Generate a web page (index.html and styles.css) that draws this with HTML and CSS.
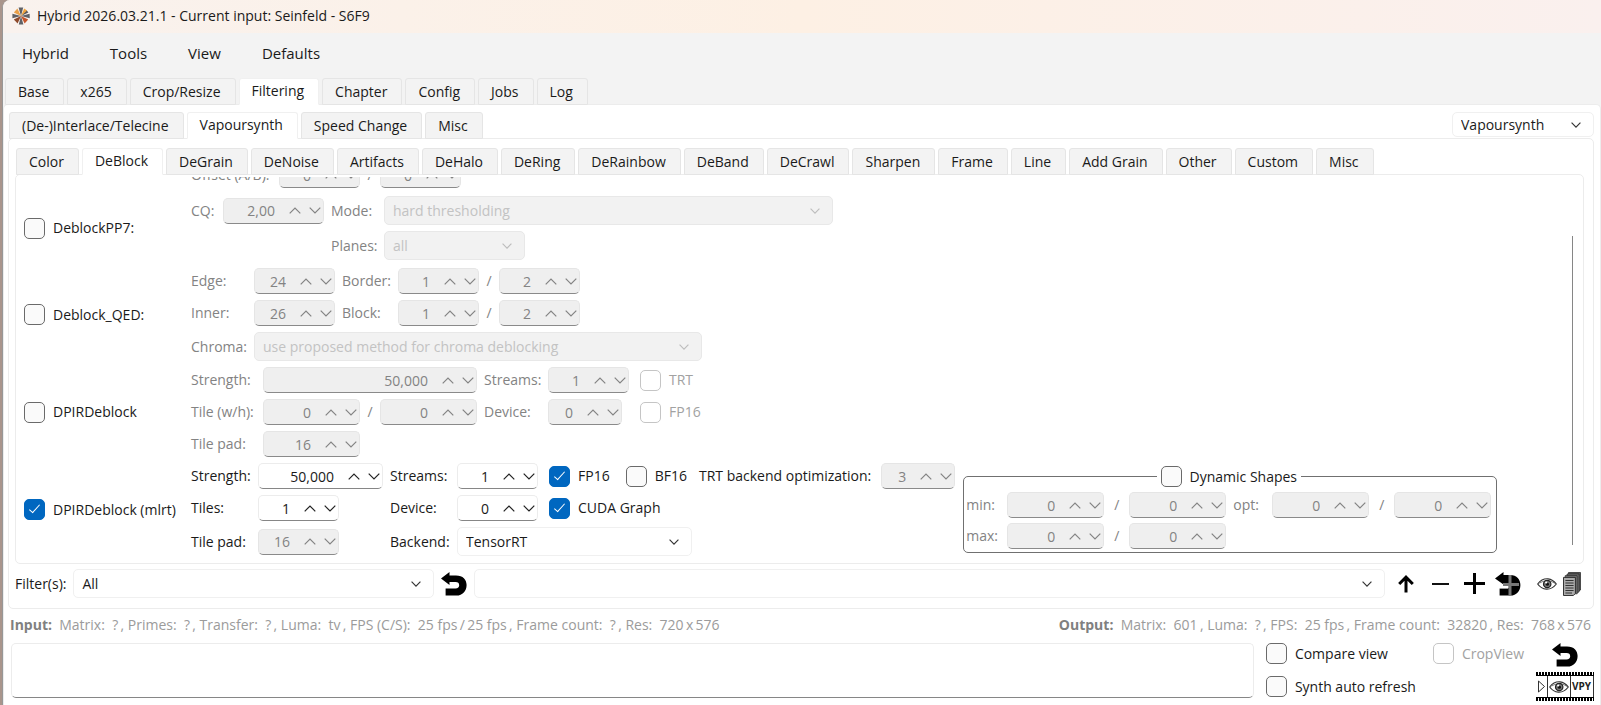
FILE: index.html
```html
<!DOCTYPE html>
<html lang="en">
<head>
    <meta charset="UTF-8">
    <meta name="viewport" content="width=device-width, initial-scale=1.0">
    <title>Hybrid 2026.03.21.1 - Current input: Seinfeld - S6F9</title>
    <link rel="stylesheet" href="styles.css">
</head>
<body>
    <svg class="sprite" aria-hidden="true">
        <symbol id="chevron-up" viewBox="0 0 12 7"><path d="M0.7 6.3 L6 1 L11.3 6.3"/></symbol>
        <symbol id="chevron-down" viewBox="0 0 12 7"><path d="M0.7 0.7 L6 6 L11.3 0.7"/></symbol>
        <symbol id="undo" viewBox="0 0 26 24">
            <path fill="#000" d="M0 6.5 L8.5 0 V3.4 H15 C22 3.4 25.6 7.6 25.6 13 C25.6 19 21.5 23.6 15.5 23.6 H4.6 V16.6 H14.4 C17 16.6 18.2 15.1 18.2 13.3 C18.2 11.3 16.9 10.1 14.6 10.1 H8.5 V13 Z"/>
        </symbol>
        <symbol id="eye" viewBox="0 0 20 12">
            <path fill="#fff" stroke="#333" stroke-width="1.2" d="M0.7 6 C4 1.5 8 0.6 11 0.8 C15 1.2 17.6 3.6 19.3 6 C16 10.2 12.6 11.4 9.4 11.2 C5.6 10.9 2.8 9 0.7 6 Z"/>
            <path fill="none" stroke="#555" stroke-width="0.8" d="M2.6 5.2 C6 2.4 13.6 1.6 17.6 5.4"/>
            <circle cx="10.2" cy="6" r="3.7" fill="#777" stroke="#222" stroke-width="1.2"/>
            <circle cx="10.4" cy="6.2" r="1.6" fill="#111"/>
            <circle cx="9.2" cy="4.5" r="1.1" fill="#fff"/>
        </symbol>
    </svg>

    <div class="window">
        <header class="titlebar">
            <svg class="logo" viewBox="0 0 18 18">
                <path fill="#5f6166" d="M9 9 L6.6 0.6 L11.2 0.4 Z M9 9 L17.6 6.8 L17.8 11.2 Z M9 9 L11.4 17.6 L6.8 17.6 Z M9 9 L0.4 11.2 L0.4 6.8 Z"/>
                <path fill="#e9a04a" d="M9 9 L1.8 5.4 L5.4 1.6 Z"/>
                <path fill="#5a5a5e" d="M9 9 L14.4 3 L16.4 5.6 Z"/>
                <path fill="#f0a43c" d="M9 9 L12.2 1.4 L15 3.4 Z"/>
                <path fill="#c4552a" d="M9 9 L16.2 12.6 L12.6 16.4 Z"/>
                <path fill="#8e4a2c" d="M9 9 L5.6 16.6 L1.8 12.6 Z"/>
            </svg>
            <span>Hybrid 2026.03.21.1 - Current input: Seinfeld - S6F9</span>
        </header>

        <nav class="menubar">
            <button type="button">Hybrid</button>
            <button type="button">Tools</button>
            <button type="button">View</button>
            <button type="button">Defaults</button>
        </nav>

        <div class="tabs tabs-main" role="tablist">
            <button type="button" role="tab">Base</button>
            <button type="button" role="tab">x265</button>
            <button type="button" role="tab">Crop/Resize</button>
            <button type="button" role="tab" class="active" aria-selected="true">Filtering</button>
            <button type="button" role="tab">Chapter</button>
            <button type="button" role="tab">Config</button>
            <button type="button" role="tab">Jobs</button>
            <button type="button" role="tab">Log</button>
        </div>

        <main class="pane pane-main">
            <div class="tab-line">
                <div class="tabs" role="tablist">
                    <button type="button" role="tab">(De-)Interlace/Telecine</button>
                    <button type="button" role="tab" class="active" aria-selected="true">Vapoursynth</button>
                    <button type="button" role="tab">Speed Change</button>
                    <button type="button" role="tab">Misc</button>
                </div>
                <div class="combo combo-engine">
                    <select aria-label="Filter engine"><option>Vapoursynth</option></select>
                    <svg class="arrow"><use href="#chevron-down"/></svg>
                </div>
            </div>

            <section class="pane pane-filtering">
                <div class="tabs" role="tablist">
                    <button type="button" role="tab">Color</button>
                    <button type="button" role="tab" class="active" aria-selected="true">DeBlock</button>
                    <button type="button" role="tab">DeGrain</button>
                    <button type="button" role="tab">DeNoise</button>
                    <button type="button" role="tab">Artifacts</button>
                    <button type="button" role="tab">DeHalo</button>
                    <button type="button" role="tab">DeRing</button>
                    <button type="button" role="tab">DeRainbow</button>
                    <button type="button" role="tab">DeBand</button>
                    <button type="button" role="tab">DeCrawl</button>
                    <button type="button" role="tab">Sharpen</button>
                    <button type="button" role="tab">Frame</button>
                    <button type="button" role="tab">Line</button>
                    <button type="button" role="tab">Add Grain</button>
                    <button type="button" role="tab">Other</button>
                    <button type="button" role="tab">Custom</button>
                    <button type="button" role="tab">Misc</button>
                </div>

                <div class="pane pane-deblock">
                    <div class="filters">
                        <div class="filter disabled">
                            <div class="fields fields-offset">
                                <label for="offsetA">Offset (A/B):</label>
                                <span class="spin"><input id="offsetA" value="0" disabled></span>
                                <span>/</span>
                                <span class="spin"><input aria-label="Offset B" value="0" disabled></span>
                            </div>
                        </div>

                        <div class="filter disabled">
                            <label class="check"><input type="checkbox">DeblockPP7:</label>
                            <div class="fields fields-pp7">
                                <label for="cq">CQ:</label>
                                <span class="spin"><input id="cq" value="2,00" disabled></span>
                                <label for="mode">Mode:</label>
                                <div class="combo">
                                    <select id="mode" disabled><option>hard thresholding</option></select>
                                    <svg class="arrow"><use href="#chevron-down"/></svg>
                                </div>
                                <label for="planes" class="col-3">Planes:</label>
                                <div class="combo combo-planes">
                                    <select id="planes" disabled><option>all</option></select>
                                    <svg class="arrow"><use href="#chevron-down"/></svg>
                                </div>
                            </div>
                        </div>

                        <div class="filter disabled">
                            <label class="check"><input type="checkbox">Deblock_QED:</label>
                            <div class="fields fields-qed">
                                <label for="edge">Edge:</label>
                                <span class="spin"><input id="edge" value="24" disabled></span>
                                <label for="border">Border:</label>
                                <span class="spin"><input id="border" value="1" disabled></span>
                                <span>/</span>
                                <span class="spin"><input aria-label="Inner border" value="2" disabled></span>

                                <label for="inner" class="col-1">Inner:</label>
                                <span class="spin"><input id="inner" value="26" disabled></span>
                                <label for="block">Block:</label>
                                <span class="spin"><input id="block" value="1" disabled></span>
                                <span>/</span>
                                <span class="spin"><input aria-label="Inner block" value="2" disabled></span>

                                <label for="chroma" class="col-1">Chroma:</label>
                                <div class="combo to-end">
                                    <select id="chroma" disabled><option>use proposed method for chroma deblocking</option></select>
                                    <svg class="arrow"><use href="#chevron-down"/></svg>
                                </div>
                            </div>
                        </div>

                        <div class="filter disabled">
                            <label class="check"><input type="checkbox">DPIRDeblock</label>
                            <div class="fields fields-dpir">
                                <label for="strength">Strength:</label>
                                <span class="spin span-3"><input id="strength" value="50,000" disabled></span>
                                <label for="streams">Streams:</label>
                                <span class="spin"><input id="streams" value="1" disabled></span>
                                <label class="check"><input type="checkbox" disabled>TRT</label>

                                <label for="tileW">Tile (w/h):</label>
                                <span class="spin"><input id="tileW" value="0" disabled></span>
                                <span>/</span>
                                <span class="spin"><input aria-label="Tile height" value="0" disabled></span>
                                <label for="device">Device:</label>
                                <span class="spin spin-small"><input id="device" value="0" disabled></span>
                                <label class="check"><input type="checkbox" disabled>FP16</label>

                                <label for="tilePad">Tile pad:</label>
                                <span class="spin"><input id="tilePad" value="16" disabled></span>
                            </div>
                        </div>

                        <div class="filter">
                            <label class="check"><input type="checkbox" checked>DPIRDeblock (mlrt)</label>
                            <div class="fields fields-mlrt">
                                <label for="mlStrength">Strength:</label>
                                <span class="spin"><input id="mlStrength" value="50,000"></span>
                                <label for="mlStreams">Streams:</label>
                                <span class="spin"><input id="mlStreams" value="1"></span>
                                <div class="options">
                                    <label class="check"><input type="checkbox" checked>FP16</label>
                                    <label class="check"><input type="checkbox">BF16</label>
                                    <label for="trtLevel">TRT backend optimization:</label>
                                    <span class="spin spin-small"><input id="trtLevel" value="3" disabled></span>
                                </div>

                                <label for="tiles">Tiles:</label>
                                <span class="spin spin-medium"><input id="tiles" value="1"></span>
                                <label for="mlDevice">Device:</label>
                                <span class="spin"><input id="mlDevice" value="0"></span>
                                <div class="options">
                                    <label class="check"><input type="checkbox" checked>CUDA Graph</label>
                                </div>

                                <label for="mlTilePad">Tile pad:</label>
                                <span class="spin spin-medium"><input id="mlTilePad" value="16" disabled></span>
                                <label for="backend">Backend:</label>
                                <div class="combo combo-backend">
                                    <select id="backend"><option>TensorRT</option></select>
                                    <svg class="arrow"><use href="#chevron-down"/></svg>
                                </div>
                            </div>

                            <fieldset class="shapes">
                                <legend><label class="check"><input type="checkbox">Dynamic Shapes</label></legend>
                                <div class="fields fields-shapes">
                                    <label for="minW">min:</label>
                                    <span class="spin"><input id="minW" value="0" disabled></span>
                                    <span>/</span>
                                    <span class="spin"><input aria-label="min height" value="0" disabled></span>
                                    <label for="optW">opt:</label>
                                    <span class="spin"><input id="optW" value="0" disabled></span>
                                    <span>/</span>
                                    <span class="spin"><input aria-label="opt height" value="0" disabled></span>

                                    <label for="maxW">max:</label>
                                    <span class="spin"><input id="maxW" value="0" disabled></span>
                                    <span>/</span>
                                    <span class="spin"><input aria-label="max height" value="0" disabled></span>
                                </div>
                            </fieldset>
                        </div>
                    </div>
                    <div class="scrollbar"></div>
                </div>

                <div class="filter-bar">
                    <label for="filterSelect">Filter(s):</label>
                    <div class="combo combo-filter">
                        <select id="filterSelect"><option>All</option></select>
                        <svg class="arrow"><use href="#chevron-down"/></svg>
                    </div>
                    <button type="button" class="icon" aria-label="Reset filter"><svg width="26" height="24"><use href="#undo"/></svg></button>
                    <div class="combo combo-custom">
                        <select aria-label="Saved settings"><option></option></select>
                        <svg class="arrow"><use href="#chevron-down"/></svg>
                    </div>
                    <div class="tools">
                        <button type="button" class="icon icon-wide" aria-label="Load">
                            <svg width="16" height="18" viewBox="0 0 16 18"><path fill="none" stroke="#000" stroke-width="3" d="M8 17.5 V2.5 M1.2 9 L8 2.2 L14.8 9"/></svg>
                        </button>
                        <button type="button" class="icon icon-wide" aria-label="Remove">
                            <svg width="17" height="2" viewBox="0 0 17 2"><path fill="#111" d="M0 0 H17 V2 H0 Z"/></svg>
                        </button>
                        <button type="button" class="icon icon-wide" aria-label="Add">
                            <svg width="21" height="21" viewBox="0 0 21 21"><path fill="#000" d="M9 0 H12 V9 H21 V12 H12 V21 H9 V12 H0 V9 H9 Z"/></svg>
                        </button>
                        <button type="button" class="icon icon-wide" aria-label="Restore and add">
                            <svg width="26" height="24" viewBox="0 0 26 24">
                                <path fill="#000" d="M0 6.5 L8.5 0 V3 H15 C22 3 25.4 7.6 25.4 13 C25.4 19 21.5 23.6 15.5 23.6 H4.6 V16.4 H13 V13 H8.5 V12.6 Z"/>
                                <path fill="#777" d="M13.5 3 H16.5 V11 H24 V14 H16.5 V23.4 H13.5 V14 H8 V11 H13.5 Z"/>
                                <path fill="#fff" d="M4.6 14 H13.5 V16.2 H4.6 Z"/>
                            </svg>
                        </button>
                        <button type="button" class="icon icon-eye" aria-label="Preview"><svg width="20" height="12"><use href="#eye"/></svg></button>
                        <button type="button" class="icon" aria-label="Show script">
                            <svg width="18" height="24" viewBox="0 0 18 24">
                                <path fill="#555" stroke="#222" stroke-width="0.7" d="M5.5 0.5 H17.5 V18 L16 19 H5.5 Z"/>
                                <path fill="#777" stroke="#222" stroke-width="0.7" d="M4 2 H16 V20 L14.5 20.5 H4 Z"/>
                                <path fill="#777" stroke="#222" stroke-width="0.7" d="M2.2 3.6 H14.2 V21.8 H2.2 Z"/>
                                <path fill="#aaa" stroke="#222" stroke-width="0.9" d="M0.5 5.4 H12.4 V21.4 L10.4 23.5 H0.5 Z"/>
                                <path stroke="#333" stroke-width="1" d="M2.4 8.5 H10.6 M2.4 11 H10.6 M2.4 13.5 H10.6 M2.4 16 H10.6 M2.4 18.5 H10.6 M2.4 21 H9"/>
                            </svg>
                        </button>
                    </div>
                </div>
            </section>

            <div class="status">
                <p><b>Input:</b>&nbsp; Matrix:&nbsp; ?&thinsp;, Primes:&nbsp; ?&thinsp;, Transfer:&nbsp; ?&thinsp;, Luma:&nbsp; tv&thinsp;, FPS (C/S):&nbsp; 25 fps&thinsp;/&thinsp;25 fps&thinsp;, Frame count:&nbsp; ?&thinsp;, Res:&nbsp; 720&thinsp;x&thinsp;576</p>
                <p><b>Output:</b>&nbsp; Matrix:&nbsp; 601&thinsp;, Luma:&nbsp; ?&thinsp;, FPS:&nbsp; 25 fps&thinsp;, Frame count:&nbsp; 32820&thinsp;, Res:&nbsp; 768&thinsp;x&thinsp;576</p>
            </div>

            <footer class="bottom">
                <textarea aria-label="Script log"></textarea>
                <div class="view-checks">
                    <label class="check"><input type="checkbox">Compare view</label>
                    <label class="check"><input type="checkbox" disabled>CropView</label>
                    <label class="check"><input type="checkbox">Synth auto refresh</label>
                </div>
                <div class="view-buttons">
                    <button type="button" class="icon" aria-label="Reset view"><svg width="26" height="24"><use href="#undo"/></svg></button>
                    <button type="button" class="icon" aria-label="Vapoursynth preview">
                        <svg width="58" height="29" viewBox="0 0 58 29">
                            <path fill="#fff" d="M0 0 H58 V29 H0 Z"/>
                            <path stroke="#000" stroke-width="3" stroke-dasharray="2 1" d="M0 1.5 H58 M0 27.5 H58"/>
                            <path stroke="#000" stroke-width="1" d="M0 3.5 H58 M0 25.5 H58"/>
                            <path fill="none" stroke="#333" stroke-width="1" d="M11.5 4 V25 M34.5 4 V25 M57.5 4 V25 M2.5 9 L8.5 14.5 L2.5 20 Z"/>
                            <use href="#eye" x="13" y="9" width="20" height="12"/>
                            <text class="vpy" x="36" y="18">VPY</text>
                        </svg>
                    </button>
                </div>
            </footer>
        </main>
    </div>

    <script src="script.js"></script>
</body>
</html>
```
FILE: styles.css
```css
body {
    margin: 0;
    padding-left: 2px;
    background-color: #a9958c;
    font-family: "Open Sans", "Noto Sans", sans-serif;
    font-size: 14px;
    line-height: 20px;
    color: #1a1a1a;
}
button, input, select, textarea {
    box-sizing: border-box;
    margin: 0;
    font: inherit;
    color: inherit;
}
p {
    margin: 0;
}
.sprite {
    display: none;
}
.window {
    box-sizing: border-box;
    display: flex;
    flex-direction: column;
    height: 100vh;
    overflow: hidden;
    border-left: 1px solid #979797;
    border-radius: 8px 0 0 0;
    background-color: #f3f3f3;
}

/* title and menu */
.titlebar {
    display: flex;
    align-items: center;
    gap: 7px;
    height: 33px;
    padding-left: 9px;
    background: linear-gradient(to right, #f9f2ee, #fdf0e4 50%, #faf0ee);
}
.titlebar span {
    padding-bottom: 2px;
}
.logo {
    width: 18px;
    height: 18px;
    padding-bottom: 2px;
}
.menubar {
    display: flex;
    align-items: center;
    gap: 41px;
    height: 45px;
    padding-left: 19px;
    font-size: 15px;
    box-sizing: border-box;
    padding-bottom: 6px;
}
.menubar button {
    padding: 0;
    border: none;
    background: none;
}

/* tabs */
.tabs {
    display: flex;
    gap: 3px;
    margin-bottom: -1px;
    position: relative;
}
.tabs button {
    height: 27px;
    padding: 1px 14px 0 12px;
    border: 1px solid #e5e5e5;
    border-radius: 3px 3px 0 0;
    background-color: #f3f3f3;
    line-height: 20px;
    white-space: nowrap;
}
.tabs .active {
    padding-top: 0;
    padding-bottom: 2px;
    border-color: #f0f0f0;
    border-bottom-color: #fff;
    background-color: #fff;
}
.tabs-main {
    padding-left: 2px;
}

/* panes */
.pane {
    display: flex;
    flex-direction: column;
    box-sizing: border-box;
    border: 1px solid #ececec;
    border-radius: 5px;
    background-color: #fff;
}
.pane-main {
    flex: 1;
    min-height: 0;
    padding: 7px 6px 4px 4px;
    border-bottom: none;
    border-radius: 5px 5px 0 0;
}
.pane-filtering {
    flex: 1;
    min-height: 0;
    padding: 9px 9px 10px 6px;
}
.pane-filtering > .tabs {
    padding-left: 1px;
}
.pane-deblock {
    flex: 1;
    min-height: 0;
    flex-direction: row;
    padding: 2px 10px 7px 8px;
}
.tab-line {
    display: flex;
    justify-content: space-between;
    padding-left: 1px;
}

/* combo boxes */
.combo {
    position: relative;
    height: 29px;
}
.combo select {
    appearance: none;
    width: 100%;
    height: 100%;
    padding: 0 30px 0 8px;
    border: 1px solid #f0f0f0;
    border-radius: 5px;
    background-color: #fff;
}
.combo select:disabled {
    border-color: #e8e8e8;
    background-color: #f2f2f2;
    color: #c3c3c3;
    opacity: 1;
}
.arrow {
    position: absolute;
    right: 13px;
    top: 50%;
    width: 10px;
    height: 6px;
    margin-top: -3px;
    fill: none;
    stroke: #333;
    stroke-width: 1.4;
    pointer-events: none;
}
select:disabled + .arrow {
    stroke: #bdbdbd;
}
.combo-engine {
    width: 142px;
    height: 25px;
}
.combo-planes {
    width: 141px;
}
.combo-backend {
    width: 235px;
}
.combo-filter {
    width: 361px;
}
.combo-custom {
    flex: 1;
}

/* spin boxes */
.spin {
    position: relative;
    display: block;
    height: 26px;
}
.spin input {
    width: 100%;
    height: 100%;
    padding: 0 48px 0 4px;
    border: 1px solid #ececec;
    border-bottom-color: #868686;
    border-radius: 5px;
    background-color: #fff;
    text-align: right;
}
.spin input:disabled {
    border-color: #e5e5e5;
    border-bottom-color: #8a8a8a;
    background-color: #efefef;
    color: #838383;
}
.spin .steps {
    position: absolute;
    top: 0;
    right: 3px;
    display: flex;
    align-items: center;
    gap: 8px;
    height: 100%;
}
.spin button {
    display: flex;
    padding: 0;
    border: none;
    background: none;
}
.spin svg {
    width: 12px;
    height: 7px;
    fill: none;
    stroke: #222;
    stroke-width: 1.2;
}
.spin input:disabled + .steps svg {
    stroke: #838383;
}
.spin-small {
    width: 74px;
}
.spin-medium {
    width: 81px;
}

/* check boxes */
.check {
    display: flex;
    align-items: center;
    gap: 8px;
    white-space: nowrap;
}
.check input {
    appearance: none;
    flex: none;
    display: flex;
    justify-content: center;
    width: 21px;
    height: 21px;
    border: 1px solid #6a6a6a;
    border-radius: 5px;
    background-color: #fafafa;
}
.check input:checked {
    border-color: #0067c0;
    background-color: #0067c0;
}
.check input:checked::after {
    content: "";
    width: 4px;
    height: 10px;
    margin-top: 2px;
    border: solid #fff;
    border-width: 0 1px 1px 0;
    transform: rotate(42deg);
}
.check input:disabled {
    border-color: #c5c5c5;
    background-color: #fff;
}
.check:has(input:disabled) {
    color: #a2a2a2;
}

/* filter settings, scrolled down to the last one */
.filters {
    flex: 1;
    display: flex;
    flex-direction: column;
    justify-content: flex-end;
    gap: 6px;
    overflow: hidden;
}
.filter {
    display: flex;
    align-items: center;
    gap: 8px;
}
.filter:nth-child(-n+2) {
    margin-bottom: 2px;
}
.filter > .check {
    width: 159px;
}
.disabled .fields {
    color: #838383;
}
.fields {
    display: grid;
    align-items: center;
    gap: 6px 7px;
    white-space: nowrap;
}
.fields .check {
    margin-left: 4px;
}
.fields-offset {
    grid-template-columns: 81px 81px 6px 81px;
    margin-left: 167px;
}
.fields-pp7 {
    grid-template-columns: 25px 101px 46px 449px;
}
.fields-qed {
    grid-template-columns: 56px 81px 49px 81px 6px 81px 115px;
}
.fields-dpir {
    grid-template-columns: 65px 97px 6px 97px 57px 81px auto;
}
.fields-mlrt {
    grid-template-columns: 60px 125px 60px 81px auto;
}
.fields-mlrt .combo {
    grid-column: 4 / -1;
}
.col-1 {
    grid-column: 1;
}
.col-3 {
    grid-column: 3;
}
.span-3 {
    grid-column: span 3;
}
.to-end {
    grid-column: 2 / -1;
}
.options {
    display: flex;
    align-items: center;
    gap: 12px;
}
.options .spin {
    margin-left: -2px;
}
.shapes {
    margin: 0;
    padding: 5px 5px 3px 2px;
    border: 1px solid #707070;
    border-radius: 5px;
}
.shapes legend {
    margin: 0 auto;
    padding: 0 4px;
}
.fields-shapes {
    grid-template-columns: 34px 97px 11px 97px 32px 97px 11px 97px;
    row-gap: 5px;
    color: #838383;
}
.fields > span:not(.spin) {
    text-align: center;
}
.scrollbar {
    width: 1px;
    margin: 59px 0 11px;
    background-color: #868686;
}

/* filter bar */
.filter-bar {
    display: flex;
    align-items: center;
    gap: 7px;
    padding-top: 5px;
}
.icon {
    display: flex;
    padding: 0;
    border: none;
    background: none;
}
.icon-wide {
    justify-content: center;
    width: 34px;
}
.tools {
    display: flex;
    align-items: center;
    padding-right: 3px;
    margin-left: -3px;
}
.icon-eye {
    margin: 0 6px 0 12px;
}

/* status and bottom area */
.status {
    display: flex;
    justify-content: space-between;
    padding: 6px 3px 8px 2px;
    color: #9b9b9b;
}
.status b {
    color: #808080;
}
.bottom {
    display: flex;
    gap: 12px;
    padding-left: 3px;
}
.bottom textarea {
    flex: 1;
    height: 55px;
    border: 1px solid #ececec;
    border-bottom-color: #868686;
    border-radius: 5px;
    resize: none;
}
.view-checks {
    display: grid;
    grid-template-columns: 153px auto;
    gap: 12px 14px;
    align-content: start;
}
.view-buttons {
    display: flex;
    flex-direction: column;
    align-items: center;
    gap: 5px;
}
.vpy {
    font-size: 10px;
    font-weight: bold;
    fill: #222;
}
```
FILE: script.js
```js
// add the up/down buttons to every spin box
document.querySelectorAll('.spin').forEach(function (spin) {
    const input = spin.querySelector('input');
    const steps = document.createElement('span');
    steps.className = 'steps';
    steps.innerHTML =
        '<button type="button" aria-label="Increase"><svg><use href="#chevron-up"/></svg></button>' +
        '<button type="button" aria-label="Decrease"><svg><use href="#chevron-down"/></svg></button>';
    spin.appendChild(steps);

    const buttons = steps.querySelectorAll('button');
    buttons.forEach(button => button.disabled = input.disabled);
    buttons[0].onclick = () => step(input, 1);
    buttons[1].onclick = () => step(input, -1);
});

function step(input, amount) {
    const decimals = (input.value.split(',')[1] || '').length;
    const value = parseFloat(input.value.replace(',', '.')) || 0;
    input.value = Math.max(0, value + amount).toFixed(decimals).replace('.', ',');
}
```
